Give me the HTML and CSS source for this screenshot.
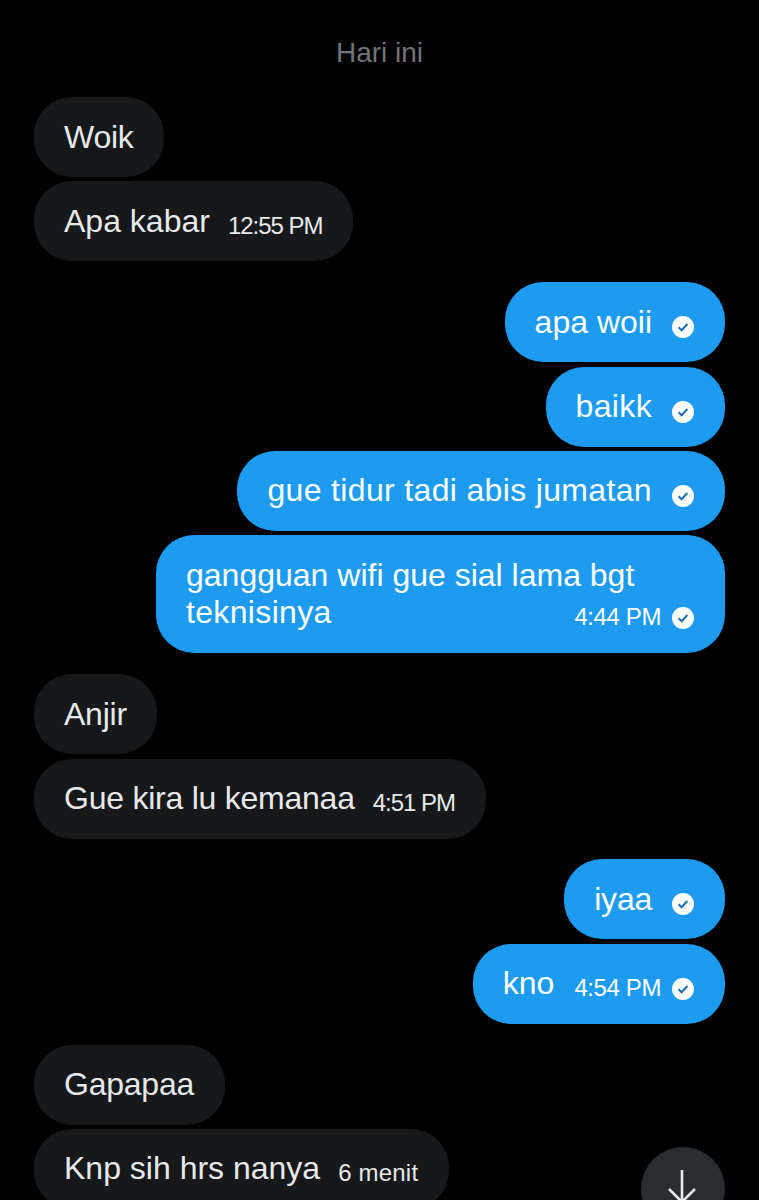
FILE: index.html
```html
<!DOCTYPE html>
<html lang="id">
<head>
<meta charset="utf-8">
<title>Pesan</title>
<link rel="stylesheet" href="styles.css">
</head>
<body>
<svg class="defs" width="0" height="0" aria-hidden="true">
  <symbol id="tick" viewBox="0 0 22 22">
    <circle cx="11" cy="11" r="11" fill="#fff"/>
    <path d="M6.6 11.3l3 3 5.8-6.3" fill="none" stroke="#1d6fae" stroke-width="2"/>
  </symbol>
</svg>
<main class="chat">
  <div class="day">Hari ini</div>

  <section class="group in first">
    <div class="bubble"><span class="text tight">Woik</span></div>
    <div class="bubble"><span class="text">Apa kabar</span><span class="time">12:55 PM</span></div>
  </section>

  <section class="group out">
    <div class="bubble"><span class="text">apa woii</span><svg class="tick"><use href="#tick"/></svg></div>
    <div class="bubble"><span class="text loose">baikk</span><svg class="tick"><use href="#tick"/></svg></div>
    <div class="bubble"><span class="text loose">gue tidur tadi abis jumatan</span><svg class="tick"><use href="#tick"/></svg></div>
    <div class="bubble multi">
      <div class="text">gangguan wifi gue sial lama bgt</div>
      <div class="last-row"><span class="text loose">teknisinya</span><span class="meta"><span class="time">4:44 PM</span><svg class="tick"><use href="#tick"/></svg></span></div>
    </div>
  </section>

  <section class="group in">
    <div class="bubble"><span class="text tight">Anjir</span></div>
    <div class="bubble"><span class="text tight">Gue kira lu kemanaa</span><span class="time">4:51 PM</span></div>
  </section>

  <section class="group out">
    <div class="bubble"><span class="text tight">iyaa</span><svg class="tick"><use href="#tick"/></svg></div>
    <div class="bubble"><span class="text">kno</span><span class="time">4:54 PM</span><svg class="tick"><use href="#tick"/></svg></div>
  </section>

  <section class="group in">
    <div class="bubble"><span class="text tight">Gapapaa</span></div>
    <div class="bubble"><span class="text">Knp sih hrs nanya</span><span class="time relative">6 menit</span></div>
  </section>
</main>
<button class="scroll-down" aria-label="Ke bawah">
  <svg width="32" height="40" viewBox="0 0 32 40"><path d="M15 2v32M2 21l13 13 13-13" fill="none" stroke="#e7e9ea" stroke-width="2.6"/></svg>
</button>
</body>
</html>
```
FILE: styles.css
```css
* { box-sizing: border-box; }
html, body { margin: 0; height: 1200px; overflow: hidden; background: #000; }
body { position: relative; font-family: "Liberation Sans", Arial, sans-serif; color: #e7e9ea; }
.defs { position: absolute; }
.chat { display: flex; flex-direction: column; padding: 0 34px; }
.day { height: 97px; padding-top: 36px; text-align: center; font-size: 28px; line-height: 34px; color: #71767b; }
.group { display: flex; flex-direction: column; gap: 4.4px; margin-top: 20.8px; }
.group.first { margin-top: 0; }
.group.in { align-items: flex-start; }
.group.out { align-items: flex-end; }
.bubble { display: flex; align-items: center; height: 80px; padding: 0 30.5px 0 30px; border-radius: 38px; background: #16181a; }
.out .bubble { padding-right: 31px; background: #1d9bf0; color: #fff; }
.text { font-size: 32px; line-height: 37px; white-space: nowrap; }
.text.loose { letter-spacing: .34px; }
.text.tight { letter-spacing: -.24px; }
.time { margin: 9px 0 0 18px; font-size: 24px; letter-spacing: -1px; line-height: 28px; }
.out .time { margin-left: 20px; letter-spacing: -.4px; }
.time.relative { letter-spacing: .2px; }
.tick { flex: none; width: 22px; height: 22px; margin: 10px 0 0 20px; }
.out .time + .tick { margin-left: 11px; }
.bubble.multi { display: block; height: 118px; width: 569px; padding: 22px 31px 0 30px; }
.last-row { display: flex; justify-content: space-between; align-items: center; }
.meta { display: flex; align-items: center; }
.scroll-down { position: absolute; left: 641px; top: 1147px; display: flex; justify-content: center; width: 84px; height: 84px; padding: 21px 0 0; border: 0; border-radius: 50%; background: #2a2d30; }
```
